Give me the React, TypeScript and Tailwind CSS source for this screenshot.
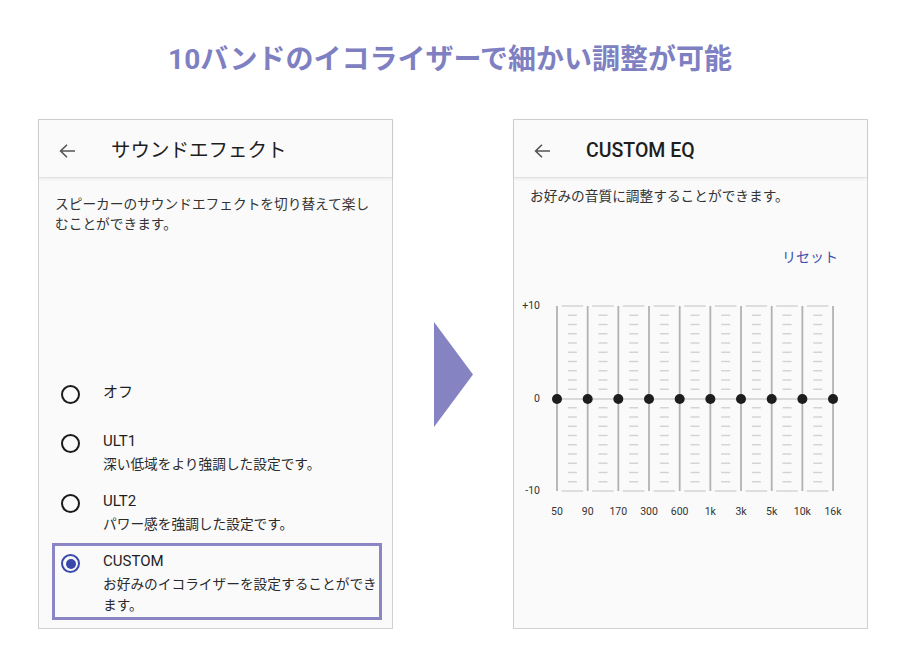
import { Fragment } from 'react'

const FREQS = ['50', '90', '170', '300', '600', '1k', '3k', '5k', '10k', '16k']

const options = [
  { id: 'off', label: 'オフ', desc: [] as string[], cls: 'pb-[16px]' },
  { id: 'ult1', label: 'ULT1', desc: ['深い低域をより強調した設定です。'], cls: 'pb-[5px]' },
  { id: 'ult2', label: 'ULT2', desc: ['パワー感を強調した設定です。'], cls: 'pb-[5px]' },
  { id: 'custom', label: 'CUSTOM', desc: ['お好みのイコライザーを設定することができ', 'ます。'], cls: 'pb-[1px]' },
]

function BackArrow() {
  return (
    <svg width="16" height="14" viewBox="0 0 16 14" fill="none" stroke="#555" strokeWidth="1.6">
      <path d="M16 7H1.6M8 0.7L1.6 7L8 13.3" />
    </svg>
  )
}

function Header({ title, bold }: { title: string; bold?: boolean }) {
  return (
    <div className="flex h-[58px] items-center border-b border-[#e2e2e2] pl-[20px] pt-[4px] shadow-[0_1px_3px_rgba(0,0,0,0.07)]">
      <BackArrow />
      <span className={`ml-[36px] text-[19.5px] leading-none text-[#1e1e1e] ${bold ? 'font-medium' : ''}`}>{title}</span>
    </div>
  )
}

function Radio({ checked }: { checked: boolean }) {
  if (checked) {
    return (
      <div className="mt-[3px] flex h-[19px] w-[19px] shrink-0 items-center justify-center rounded-full border-2 border-[#3949ab]">
        <div className="h-[10px] w-[10px] rounded-full bg-[#3949ab]" />
      </div>
    )
  }
  return <div className="mt-[3px] h-[19px] w-[19px] shrink-0 rounded-full border-2 border-[#1a1a1a]" />
}

function EqChart() {
  const xs = FREQS.map((_, i) => 43 + i * 30.67)
  const top = 11
  const zero = 104
  const bottom = 196
  const step = (bottom - top) / 20
  return (
    <svg width="353" height="228" className="block">
      {xs.slice(0, 9).map((x, i) => {
        const x2 = xs[i + 1]
        const mid = (x + x2) / 2
        return (
          <g key={i} stroke="#d2d2d2" strokeWidth="1.4">
            <line x1={x + 4.5} x2={x2 - 4.5} y1={top} y2={top} />
            <line x1={x + 4.5} x2={x2 - 4.5} y1={bottom} y2={bottom} />
            {Array.from({ length: 19 }, (_, k) => k + 1)
              .filter((k) => k !== 10)
              .map((k) => (
                <line key={k} x1={mid - 4.5} x2={mid + 4.5} y1={top + k * step} y2={top + k * step} />
              ))}
          </g>
        )
      })}
      <line x1={xs[0]} x2={xs[9]} y1={zero} y2={zero} stroke="#cfcfcf" strokeWidth="1.4" />
      {xs.map((x, i) => (
        <Fragment key={i}>
          <line x1={x} x2={x} y1={top} y2={bottom} stroke="#b2b2b2" strokeWidth="1.8" />
          <circle cx={x} cy={zero} r="5" fill="#1d1d1d" />
          <text x={x} y={217} textAnchor="middle" dominantBaseline="middle" fontSize="10.5" fill="#333">
            {FREQS[i]}
          </text>
        </Fragment>
      ))}
      <g fontSize="10.5" fill="#333" textAnchor="end" dominantBaseline="middle">
        <text x="26" y={top}>+10</text>
        <text x="26" y={zero}>0</text>
        <text x="26" y={bottom}>-10</text>
      </g>
    </svg>
  )
}

export default function App() {
  return (
    <div className="h-[650px] w-[900px] bg-white font-['Roboto','Noto_Sans_CJK_JP',sans-serif] text-[#222]">
      <h1 className="pt-[40px] text-center text-[28px] font-bold leading-[40px] text-[#7e80c2]">
        10バンドのイコライザーで細かい調整が可能
      </h1>

      <div className="mt-[39px] flex pl-[38px]">
        {/* left: sound effect */}
        <div className="h-[510px] w-[355px] border border-[#d0d0d0] bg-[#fafafa]">
          <Header title="サウンドエフェクト" />
          <p className="px-[16px] pt-[16px] text-[13.7px] leading-[20px] text-[#333]">
            スピーカーのサウンドエフェクトを切り替えて楽し
            <br />
            むことができます。
          </p>
          <div className="mt-[140px] pl-[13px] pr-[10px]">
            {options.map((o) => {
              const checked = o.id === 'custom'
              return (
                <div
                  key={o.id}
                  className={`flex border-[3px] pl-[6px] pt-[5px] ${o.cls} ${checked ? 'border-[#8986c3]' : 'border-transparent'}`}
                >
                  <Radio checked={checked} />
                  <div className="ml-[23px]">
                    <div className="text-[15px] leading-[20px] text-[#1e1e1e]">{o.label}</div>
                    {o.desc.length > 0 && (
                      <div className="mt-[3px] text-[13.7px] leading-[21px] text-[#2a2a2a]">
                        {o.desc.map((d, i) => (
                          <div key={i}>{d}</div>
                        ))}
                      </div>
                    )}
                  </div>
                </div>
              )
            })}
          </div>
        </div>

        {/* arrow */}
        <div className="flex w-[120px] items-center justify-center">
          <svg width="39" height="105" viewBox="0 0 39 105">
            <polygon points="0,0 39,52.5 0,105" fill="#8583c2" />
          </svg>
        </div>

        {/* right: custom eq */}
        <div className="h-[510px] w-[355px] border border-[#d0d0d0] bg-[#fafafa]">
          <Header title="CUSTOM EQ" bold />
          <p className="px-[16px] pt-[8px] text-[13.7px] leading-[20px] text-[#333]">
            お好みの音質に調整することができます。
          </p>
          <div className="mt-[41px] flex justify-end pr-[29px]">
            <span className="text-[14px] leading-[20px] text-[#3d50ae]">リセット</span>
          </div>
          <div className="mt-[28px]">
            <EqChart />
          </div>
        </div>
      </div>
    </div>
  )
}
